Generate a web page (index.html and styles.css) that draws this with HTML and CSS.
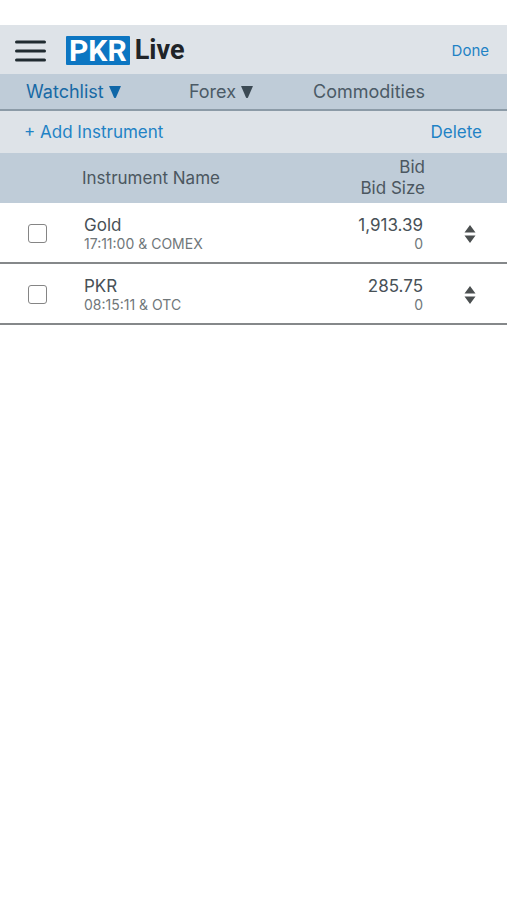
FILE: index.html
```html
<!DOCTYPE html>
<html lang="en">
<head>
<meta charset="utf-8">
<meta name="viewport" content="width=device-width, initial-scale=1">
<title>PKR Live</title>
<link rel="stylesheet" href="styles.css">
</head>
<body>
<header class="topbar">
  <button class="menu" type="button" aria-label="Menu">
    <svg width="31" height="24" viewBox="0 0 31 24" aria-hidden="true"><path d="M1.500 3h28M1.500 12h28M1.500 21h28" fill="none" stroke="#202b30" stroke-width="3" stroke-linecap="round"/></svg>
  </button>
  <a class="logo" href="#"><span class="logo-box">PKR</span><span class="logo-text">Live</span></a>
  <button class="link done" type="button">Done</button>
</header>
<nav class="tabs">
  <a class="tab active" href="#">Watchlist <svg class="caret" width="12" height="12" viewBox="0 0 12 12" aria-hidden="true"><path d="M.5 0h11q.5 0 .3.600L7 11.500Q6 12.500 5 11.500L.2.600Q0 0 .5 0z" fill="#0f67a8"/></svg></a>
  <a class="tab" href="#">Forex <svg class="caret" width="12" height="12" viewBox="0 0 12 12" aria-hidden="true"><path d="M.5 0h11q.5 0 .3.600L7 11.500Q6 12.500 5 11.500L.2.600Q0 0 .5 0z" fill="#3c4a54"/></svg></a>
  <a class="tab" href="#">Commodities</a>
</nav>
<main>
  <div class="actions">
    <button class="link" type="button">+ Add Instrument</button>
    <button class="link" type="button">Delete</button>
  </div>
  <table class="list">
    <colgroup><col class="col-check"><col><col class="col-bid"><col class="col-move"></colgroup>
    <thead>
      <tr><th></th><th class="name">Instrument Name</th><th class="bid">Bid<br>Bid Size</th><th></th></tr>
    </thead>
    <tbody>
      <tr>
        <td class="check"><input type="checkbox" aria-label="Gold"></td>
        <td class="name">Gold<small>17:11:00 &amp; COMEX</small></td>
        <td class="bid">1,913.39<small>0</small></td>
        <td class="move"><button type="button" aria-label="Move Gold"><svg width="12" height="18" viewBox="0 0 12 18" aria-hidden="true"><path d="M6 0l5.500 7.500H.5zM.5 10.500h11L6 18z" fill="#4b4f50"/></svg></button></td>
      </tr>
      <tr>
        <td class="check"><input type="checkbox" aria-label="PKR"></td>
        <td class="name">PKR<small>08:15:11 &amp; OTC</small></td>
        <td class="bid">285.75<small>0</small></td>
        <td class="move"><button type="button" aria-label="Move PKR"><svg width="12" height="18" viewBox="0 0 12 18" aria-hidden="true"><path d="M6 0l5.500 7.500H.5zM.5 10.500h11L6 18z" fill="#4b4f50"/></svg></button></td>
      </tr>
    </tbody>
  </table>
</main>
</body>
</html>
```
FILE: styles.css
```css
* { box-sizing: border-box; }
body {
  margin: 0;
  padding-top: 25px;
  background: #fff;
  color: #485157;
  font: 17px/20px Inter, "Liberation Sans", sans-serif;
}
button {
  margin: 0;
  padding: 0;
  border: 0;
  background: none;
  font: inherit;
  color: inherit;
}
a { color: inherit; text-decoration: none; }
svg { display: block; }
.topbar {
  display: flex;
  align-items: center;
  height: 49px;
  padding: 2px 18px 0 15px;
  background: #dee3e8;
}
.logo {
  display: flex;
  align-items: center;
  gap: 5px;
  margin-left: 20px;
  color: #202428;
  font: bold 27px/29px Roboto, sans-serif;
}
.logo-box {
  padding: 0 3px;
  border-radius: 1px;
  background: #0c76c2;
  color: #fff;
  font-size: 30px;
}
.link { color: #1f82c5; }
.done { margin-left: auto; font-size: 15px; }
.tabs {
  display: grid;
  grid-template-columns: 21fr 16fr 25fr;
  align-items: center;
  height: 37px;
  padding-left: 26px;
  border-bottom: 2px solid #8c9ba7;
  background: #bfccd8;
  font-size: 18px;
}
.tab { display: flex; align-items: center; gap: 5px; color: #4b5a66; }
.active { color: #1769a5; }
.actions {
  display: flex;
  align-items: center;
  justify-content: space-between;
  height: 42px;
  padding: 0 25px 0 24px;
  background: #dee3e8;
}
.list {
  width: 100%;
  table-layout: fixed;
  border-collapse: separate;
  border-spacing: 0;
  box-shadow: 4px 4px 4px #d0d0d0;
}
.col-check { width: 82px; }
.col-bid { width: 120px; }
.col-move { width: 82px; }
th, td { padding: 0; font-weight: 400; text-align: left; vertical-align: middle; }
th { height: 50px; background: #bfccd8; color: #4b5760; line-height: 21px; }
td { height: 61px; padding-top: 2px; border-bottom: 2px solid #85888a; background: #fff; }
.bid { text-align: right; }
td.name { padding-left: 2px; }
td.bid { padding-right: 2px; }
td small { display: block; color: #70777a; font-size: 14px; line-height: 17px; }
td.check { padding-left: 28px; }
.check input {
  display: block;
  appearance: none;
  width: 19px;
  height: 19px;
  margin: 0;
  border: 1px solid #858585;
  border-radius: 3px;
  background: #fff;
}
.check input:checked { background: #2786c6; }
.move button { display: block; margin-left: 39px; }
```
